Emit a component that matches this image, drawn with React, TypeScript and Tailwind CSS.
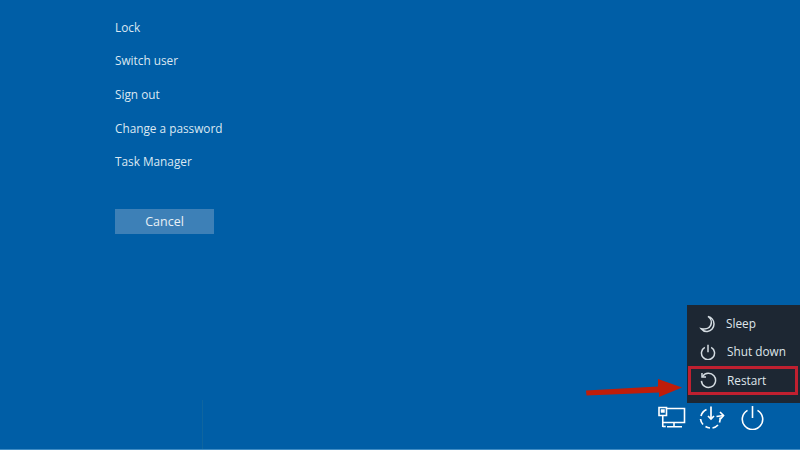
const links = ['Lock', 'Switch user', 'Sign out', 'Change a password', 'Task Manager'];

const MoonIcon = () => (
  <svg width="18" height="18" viewBox="0 0 18 18" fill="none" stroke="#d5dde3" strokeWidth="1.500">
    <path d="M9 1.500c3 2 4.200 5.600 2.800 8.600-1.300 2.800-5 4.600-9.600 3.600 1.600 2 3.900 3 6.200 2.700 3.800-.4 6.600-3.600 6.600-7.400 0-3.600-2.500-6.700-6-7.500z" />
  </svg>
);

const PowerIcon = ({ size = 16, color = '#d5dde3', sw = 1.500 }: { size?: number; color?: string; sw?: number }) => (
  <svg width={size} height={size} viewBox="0 0 24 24" fill="none" stroke={color} strokeWidth={sw * (24 / size)}>
    <path d="M7.200 5.200a9.800 9.800 0 1 0 9.600 0" />
    <path d="M12 1v11.500" />
  </svg>
);

const RestartIcon = () => (
  <svg width="17" height="17" viewBox="0 0 24 24" fill="none" stroke="#d5dde3" strokeWidth="2.100">
    <path d="M3.500 6.500A10 10 0 1 1 2 12.500" />
    <path d="M2.800 1.500v5.500h5.700" />
  </svg>
);

const NetworkIcon = () => (
  <svg width="28" height="24" viewBox="0 0 28 24" fill="none" stroke="#fff" strokeWidth="1.600">
    <path d="M8.500 2.500H26.500V16.500H5" />
    <path d="M1 1.500h7.500v8H1z" />
    <path d="M4.750 9.500V21" />
    <path d="M4.750 20.500h3" />
    <path d="M16 16.500v4.500M9 20.800h15" />
    <path d="M3 3.500h3.500v3H3z" fill="#fff" strokeWidth="0.500" />
  </svg>
);

const UpdateIcon = () => (
  <svg width="26" height="24" viewBox="0 0 26 24" fill="none" stroke="#fff" strokeWidth="1.700">
    <path d="M7.500 3.500a10 10 0 0 0-5.500 6.500" />
    <path d="M1.500 13a10 10 0 0 0 2.500 5.500" />
    <path d="M6.500 20.500a10 10 0 0 0 4.500 1.500" />
    <path d="M13.500 22a10 10 0 0 0 5.500-3" />
    <path d="M20.500 16.500a10 10 0 0 0 .5-5" />
    <path d="M12 .5v12" />
    <path d="M9 10l3 3 3-3" />
    <path d="M17.500 10.500l7-1" />
    <path d="M21 6l3.500 3.500-3 3.500" />
  </svg>
);

const App = () => {
  return (
    <div className="relative w-[800px] h-[450px] overflow-hidden border-b border-[#3f8cc4] bg-[#005ea6] font-['Open_Sans','Noto_Sans',sans-serif] text-[#dce8f2]">
      <div className="flex flex-col items-start pl-[115px] pt-[16.600px]">
        <ul className="flex flex-col gap-[13.700px]">
          {links.map((link) => (
            <li key={link} className="h-[20px] text-[11.800px] leading-[20px]">
              {link}
            </li>
          ))}
        </ul>
        <button className="mt-[37.400px] h-[25px] w-[99px] bg-[#3d80b7] text-[12.500px] leading-[25px] text-[#e8f0f6]">
          Cancel
        </button>
      </div>

      {/* faint seam in the capture */}
      <div className="absolute left-[202px] top-[400px] h-[50px] w-px bg-[#0f659f]" />

      <div className="absolute left-[658px] top-[405px] flex items-center gap-[13px]">
        <NetworkIcon />
        <UpdateIcon />
        <div className="ml-[3px] -translate-x-[1px]">
          <PowerIcon size={25} color="#fff" sw={1.600} />
        </div>
      </div>

      <div className="absolute left-[687px] top-[305px] flex h-[98px] w-[113px] flex-col bg-[#1d2733] pt-[4px] text-[11.800px] text-[#dfe5ea]">
        <div className="flex h-[29px] items-center gap-[9px] pl-[12px]">
          <MoonIcon />
          <span>Sleep</span>
        </div>
        <div className="flex h-[28px] items-center gap-[11px] pl-[13px]">
          <PowerIcon />
          <span>Shut down</span>
        </div>
        <div className="ml-[1px] mr-[2px] flex h-[29px] items-center gap-[10px] border-[3px] border-[#bf2030] pl-[9px]">
          <RestartIcon />
          <span>Restart</span>
        </div>
      </div>

      <svg className="absolute left-[585px] top-[375px]" width="100" height="30" viewBox="0 0 100 30">
        <path d="M1 15.500L73 11.500V4L97 12.500L74 22V17.500L1.500 20.500z" fill="#bf1d0a" />
      </svg>
    </div>
  );
};

export default App;
